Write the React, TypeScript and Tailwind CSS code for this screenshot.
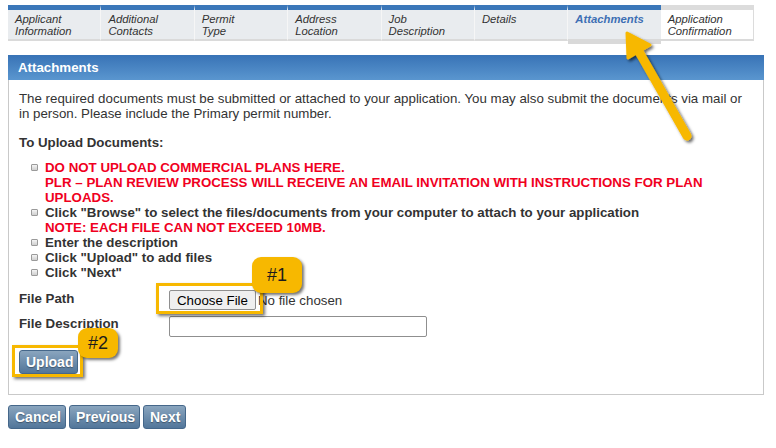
import React from 'react';

const tabs = [
  { label: ['Applicant', 'Information'], state: 'done' },
  { label: ['Additional', 'Contacts'], state: 'done' },
  { label: ['Permit', 'Type'], state: 'done' },
  { label: ['Address', 'Location'], state: 'done' },
  { label: ['Job', 'Description'], state: 'done' },
  { label: ['Details'], state: 'done' },
  { label: ['Attachments'], state: 'active' },
  { label: ['Application', 'Confirmation'], state: 'todo' },
];

const steps = [
  {
    red: true,
    lines: [
      'DO NOT UPLOAD COMMERCIAL PLANS HERE.',
      'PLR – PLAN REVIEW PROCESS WILL RECEIVE AN EMAIL INVITATION WITH INSTRUCTIONS FOR PLAN',
      'UPLOADS.',
    ],
  },
  { red: false, lines: ['Click "Browse" to select the files/documents from your computer to attach to your application'], note: 'NOTE: EACH FILE CAN NOT EXCEED 10MB.' },
  { red: false, lines: ['Enter the description'] },
  { red: false, lines: ['Click "Upload" to add files'] },
  { red: false, lines: ['Click "Next"'] },
];

function Bullet() {
  return (
    <span className="mt-[4px] mr-[7px] h-[7px] w-[7px] shrink-0 rounded-[1px] border border-[#9a9a9a] bg-gradient-to-b from-[#f4f4f4] to-[#cfcfcf]" />
  );
}

function SteelButton({ children, className = '' }: { children: React.ReactNode; className?: string }) {
  return (
    <button
      className={
        'h-[24px] rounded-[3px] border border-[#45678a] bg-gradient-to-b from-[#8aa5be] to-[#52769a] px-[6px] text-[14px] font-bold leading-none text-white [text-shadow:0_1px_1px_rgba(0,0,0,0.35)] ' +
        className
      }
    >
      {children}
    </button>
  );
}

function Callout({ text, className }: { text: string; className: string }) {
  return (
    <div
      className={
        'absolute flex items-center justify-center rounded-[9px] bg-[#f7b800] text-[18px] text-[#1c1c1c] shadow-[2px_2px_3px_rgba(0,0,0,0.55)] ' +
        className
      }
    >
      {text}
    </div>
  );
}

export default function App() {
  return (
    <div className="relative h-[448px] w-[776px] overflow-hidden bg-white pt-[5px] font-['Liberation_Sans',Arial,sans-serif] text-[#333]">
      {/* step tabs */}
      <div className="ml-[8px] flex h-[36px] w-[746px] items-start">
        {tabs.map((t, i) => (
          <div
            key={i}
            className={
              'flex-1 border-t-[5px] pl-[7px] pt-[3px] text-[11.3px] italic leading-[12px] ' +
              (t.state === 'done'
                ? 'h-[36px] border-[#3b77b9] border-r border-r-[#f6f6f6] border-b-2 border-b-[#dadada] bg-[#e9ecef] text-[#333]'
                : t.state === 'active'
                ? 'h-[39px] border-[#3b77b9] border-b-[5px] border-b-[#d9d9d9] bg-[#e9ecef] font-bold text-[#3d6fb4]'
                : 'h-[36px] border-[#dcdcdc] border-r border-r-[#dcdcdc] border-b-2 border-b-[#dadada] bg-white text-[#333]')
            }
          >
            {t.label.map((l) => (
              <div key={l}>{l}</div>
            ))}
          </div>
        ))}
      </div>

      {/* panel */}
      <div className="ml-[8px] mt-[14px] w-[756px]">
        <div className="flex h-[25px] items-center bg-gradient-to-b from-[#3873b6] to-[#5a96cf] pl-[10px] text-[13.3px] font-bold text-white">
          Attachments
        </div>
        <div className="h-[315px] border-x border-b border-[#c9c9c9] pl-[10px] pt-[11px] text-[13.3px] leading-[15px]">
          <p>
            The required documents must be submitted or attached to your application. You may also submit the documents via mail or
            <br />
            in person. Please include the Primary permit number.
          </p>
          <p className="mt-[14px] font-bold">To Upload Documents:</p>
          <ul className="mt-[10px] pl-[12px] font-bold">
            {steps.map((s, i) => (
              <li key={i} className="flex items-start">
                <Bullet />
                <div>
                  {s.lines.map((l) => (
                    <div key={l} className={s.red ? 'text-[#f0001e]' : ''}>
                      {l}
                    </div>
                  ))}
                  {s.note && <div className="text-[#f0001e]">{s.note}</div>}
                </div>
              </li>
            ))}
          </ul>

          <div className="mt-[10px] flex items-center font-bold">
            <span className="w-[150px] -translate-y-[2px]">File Path</span>
            <button className="h-[20px] rounded-[2px] border border-[#8f8f8f] bg-[#efefef] px-[7px] text-[13.3px] font-normal text-black">
              Choose File
            </button>
            <span className="ml-[2px] font-normal">No file chosen</span>
          </div>
          <div className="mt-[6px] flex items-center font-bold">
            <span className="w-[150px] -translate-y-[3px]">File Description</span>
            <input className="h-[21px] w-[258px] rounded-[2px] border border-[#8f8f8f] bg-white" />
          </div>
          <div className="mt-[13px]">
            <SteelButton className="h-[23px] w-[59px] px-0">Upload</SteelButton>
          </div>
        </div>
      </div>

      {/* navigation */}
      <div className="ml-[8px] mt-[10px] flex gap-[3px]">
        <SteelButton className="w-[58px] px-0">Cancel</SteelButton>
        <SteelButton className="w-[71px] px-0">Previous</SteelButton>
        <SteelButton className="w-[43px] px-0">Next</SteelButton>
      </div>

      {/* annotations */}
      <div className="pointer-events-none absolute left-[156px] top-[283px] h-[31px] w-[107px] border-[3px] border-[#f7b800] shadow-[2px_2px_3px_rgba(0,0,0,0.55)]" />
      <div className="pointer-events-none absolute left-[12px] top-[345px] h-[32px] w-[71px] border-[3px] border-[#f7b800] shadow-[2px_2px_3px_rgba(0,0,0,0.55)]" />
      <Callout text="#1" className="left-[252px] top-[257px] h-[36px] w-[50px]" />
      <Callout text="#2" className="left-[78px] top-[328px] h-[30px] w-[40px]" />

      <svg className="pointer-events-none absolute left-0 top-0" width="776" height="448" viewBox="0 0 776 448">
        <defs>
          <filter id="sh" x="-20%" y="-20%" width="140%" height="140%">
            <feDropShadow dx="2" dy="2" stdDeviation="1.5" floodColor="#000" floodOpacity="0.6" />
          </filter>
        </defs>
        <g filter="url(#sh)" fill="#f7b800" stroke="#f7b800">
          <line x1="687" y1="136" x2="638" y2="50" strokeWidth="9" strokeLinecap="round" />
          <polygon points="627,33 650,45 628,58" strokeWidth="3" strokeLinejoin="round" />
        </g>
      </svg>
    </div>
  );
}
